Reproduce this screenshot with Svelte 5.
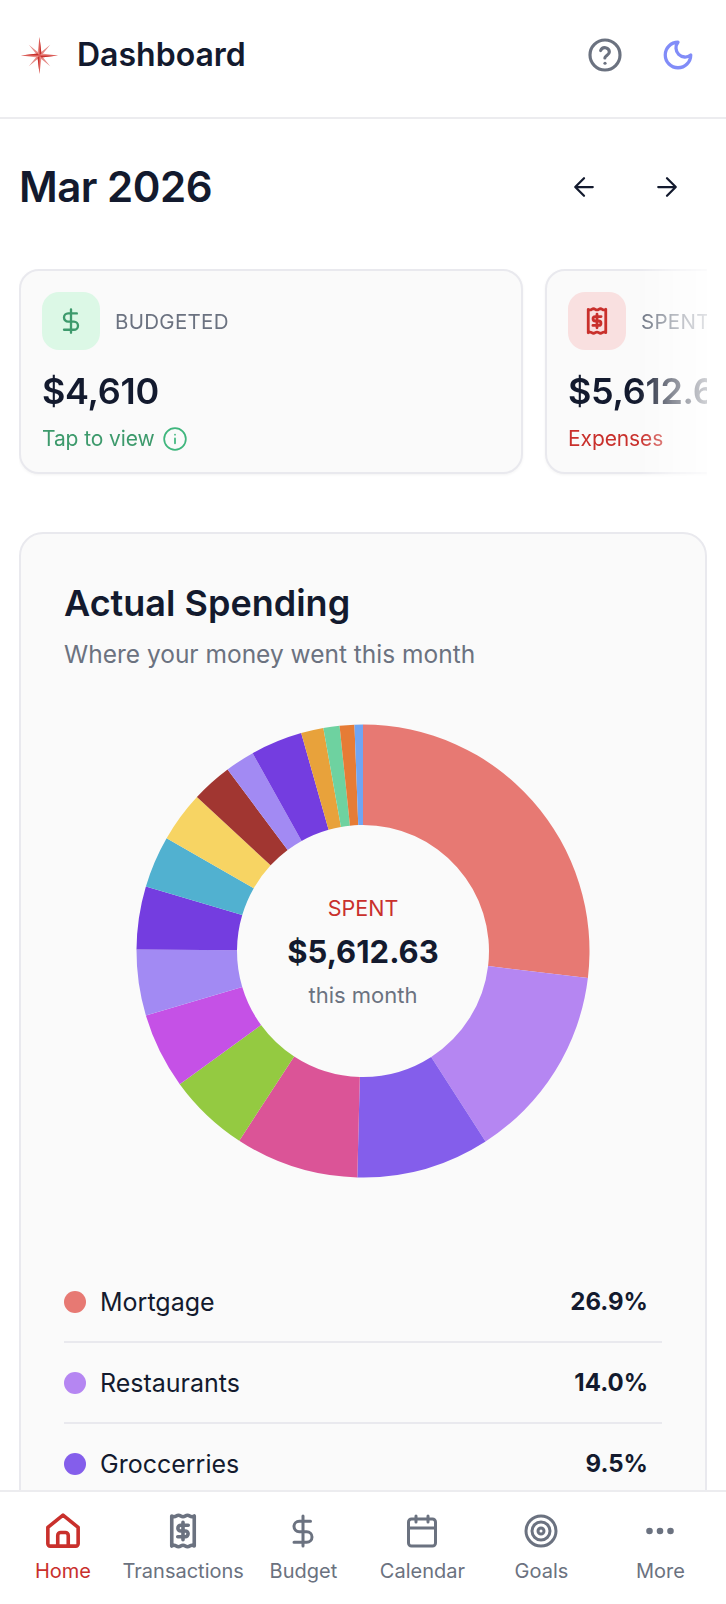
<script>
  const R = 226.5, r = 126, C = 230;
  const raw = [
    [26.9,'#e77973'],[14.0,'#b586f2'],[9.5,'#845eeb'],[8.8,'#db5497'],[5.8,'#94ca41'],
    [5.4,'#c551e6'],[4.7,'#a28af3'],[4.5,'#743de0'],[3.7,'#51b1d0'],[3.6,'#f7d463'],
    [2.9,'#a13631'],[2.1,'#a28af3'],[3.7,'#743de0'],[1.6,'#e8a23b'],[1.15,'#6ed2a0'],
    [1.05,'#e67c36'],[0.6,'#70a5f3']
  ];
  const pt = (rad, p) => {
    const a = p / 100 * 2 * Math.PI;
    return `${(C + rad * Math.sin(a)).toFixed(2)} ${(C - rad * Math.cos(a)).toFixed(2)}`;
  };
  let cum = 0;
  const segs = raw.map(([v, c]) => {
    const s = cum, e = cum + v; cum = e;
    const large = v > 50 ? 1 : 0;
    return { c, d: `M${pt(R, s)}A${R} ${R} 0 ${large} 1 ${pt(R, e)}L${pt(r, e)}A${r} ${r} 0 ${large} 0 ${pt(r, s)}Z` };
  });
  const legend = [
    ['Mortgage','26.9%','#e77973'],['Restaurants','14.0%','#b586f2'],['Groccerries','9.5%','#845eeb']
  ];
  const nav = ['Home','Transactions','Budget','Calendar','Goals','More'];
  const receipt = "M4.500 2q1.500 1 3 0t3 0 3 0 3 0 3 0V22q-1.500-1-3 0t-3 0-3 0-3 0-3 0Z";
  const dollar = "M15.500 8.200h-5a1.900 1.900 0 0 0 0 3.800h3a1.900 1.900 0 0 1 0 3.800h-5M12 6.200v11.600";
</script>

<div class="page">
  <header class="top">
    <div class="brand">
      <svg class="logo" viewBox="0 0 40 40" aria-hidden="true">
        <path d="M9 9 20 18 31 9 22 20 31 31 20 22 9 31 18 20Z" fill="#e58a85"/>
        <path d="M20 1 22 18 39 20 22 22 20 39 18 22 1 20 18 18Z" fill="#ea8a84"/>
        <path d="M20 1 22 18 20 20ZM39 20 22 22 20 20ZM20 39 18 22 20 20ZM1 20 18 18 20 20Z" fill="#c9302c"/>
      </svg>
      <h1>Dashboard</h1>
    </div>
    <div class="top-actions">
      <svg class="i help" viewBox="0 0 24 24"><circle cx="12" cy="12" r="10"/><path d="M9.100 9a3 3 0 0 1 5.800 1c0 2-3 2.600-3 4"/><path d="M12 17.500h.01"/></svg>
      <svg class="i moon" viewBox="0 0 24 24"><path d="M12 3a6.400 6.400 0 0 0 9 9 9 9 0 1 1-9-9Z"/></svg>
    </div>
  </header>

  <section class="month">
    <h2>Mar 2026</h2>
    <div class="arrows">
      <svg class="i arrow" viewBox="0 0 24 24"><path d="M19 12H5M12 19l-7-7 7-7"/></svg>
      <svg class="i arrow" viewBox="0 0 24 24"><path d="M5 12h14M12 5l7 7-7 7"/></svg>
    </div>
  </section>

  <div class="cards">
    <div class="stat first">
      <div class="stat-head">
        <span class="badge green">
          <svg class="i" viewBox="0 0 24 24"><path d="M12 2v20M17 5.500H9.500a3.500 3.500 0 0 0 0 7h5a3.500 3.500 0 0 1 0 7H6"/></svg>
        </span>
        <span class="stat-label">BUDGETED</span>
      </div>
      <div class="stat-value">$4,610</div>
      <div class="stat-note green-text">Tap to view
        <svg class="i info" viewBox="0 0 24 24"><circle cx="12" cy="12" r="10"/><path d="M12 16v-4.500M12 8h.01"/></svg>
      </div>
    </div>
    <div class="stat">
      <div class="stat-head">
        <span class="badge red">
          <svg class="i thick" viewBox="0 0 24 24"><path d={receipt}/><path d={dollar}/></svg>
        </span>
        <span class="stat-label">SPENT</span>
      </div>
      <div class="stat-value">$5,612.63</div>
      <div class="stat-note red-text">Expenses</div>
    </div>
  </div>

  <section class="panel">
    <h3>Actual Spending</h3>
    <p class="sub">Where your money went this month</p>
    <div class="donut">
      <svg viewBox="0 0 460 460" width="460" height="460" aria-hidden="true">
        {#each segs as s}<path d={s.d} fill={s.c}/>{/each}
      </svg>
      <div class="center">
        <div class="c-label">SPENT</div>
        <div class="c-value">$5,612.63</div>
        <div class="c-sub">this month</div>
      </div>
    </div>
    <ul class="legend">
      {#each legend as [n, p, c]}
        <li>
          <span class="dot" style:background={c}></span>
          <span class="name">{n}</span>
          <span class="pct">{p}</span>
        </li>
      {/each}
    </ul>
  </section>

  <nav class="bottom">
    {#each nav as n, i}
      <div class="tab" class:active={i === 0}>
        <svg class="i" class:thick={i < 2} viewBox="0 0 24 24">
          {#if i === 0}
            <path d="M12 1.400 22.100 9.600V20.500a1.600 1.600 0 0 1-1.600 1.600H3.500a1.600 1.600 0 0 1-1.600-1.600V9.600Z"/><path d="M8.500 22v-7a2 2 0 0 1 2-2h3a2 2 0 0 1 2 2v7"/>
          {:else if i === 1}
            <path d={receipt}/><path d={dollar}/>
          {:else if i === 2}
            <path d="M12 2v20M17 5.500H9.500a3.500 3.500 0 0 0 0 7h5a3.500 3.500 0 0 1 0 7H6"/>
          {:else if i === 3}
            <rect x="3" y="4" width="18" height="18" rx="2"/><path d="M8 2v4M16 2v4M3 10h18"/>
          {:else if i === 4}
            <circle cx="12" cy="12" r="10"/><circle cx="12" cy="12" r="6"/><circle cx="12" cy="12" r="2"/>
          {:else}
            <circle cx="5" cy="12" r="1.200" class="fill"/><circle cx="12" cy="12" r="1.200" class="fill"/><circle cx="19" cy="12" r="1.200" class="fill"/>
          {/if}
        </svg>
        <span>{n}</span>
      </div>
    {/each}
  </nav>
</div>

<style>
  :global(body) { margin: 0; background: #fff; }
  .page {
    position: relative;
    width: 726px;
    height: 1604px;
    overflow: hidden;
    background: #fff;
    font-family: Inter, "Liberation Sans", sans-serif;
    color: #131a2e;
  }
  .i { fill: none; stroke: currentColor; stroke-width: 2; stroke-linecap: round; stroke-linejoin: round; display: block; }
  .i.thick { stroke-width: 2.400; }
  .top {
    height: 119px;
    box-sizing: border-box;
    border-bottom: 2px solid #ececef;
    display: flex;
    align-items: center;
    justify-content: space-between;
    padding: 0 31px 7px 20px;
  }
  .brand { display: flex; align-items: center; gap: 18px; }
  .logo { width: 39px; height: 39px; }
  h1 { margin: 0; font-size: 32px; font-weight: 600; line-height: 1; }
  .top-actions { display: flex; gap: 38px; align-items: center; }
  .help { width: 36px; height: 36px; color: #6b7280; stroke-width: 2.100; }
  .moon { width: 34px; height: 34px; color: #818cf8; stroke-width: 2.300; }
  .month {
    display: flex;
    align-items: center;
    justify-content: space-between;
    padding: 43px 44px 0 19px;
    height: 50px;
  }
  h2 { margin: 0; font-size: 42px; font-weight: 600; letter-spacing: -0.5px; line-height: 50px; }
  .arrows { display: flex; gap: 53px; color: #131a2e; }
  .arrow { width: 30px; height: 30px; stroke-width: 1.800; }
  .cards {
    margin-top: 57px;
    margin-left: 19px;
    width: 688px;
    display: flex;
    gap: 22px;
    overflow: hidden;
    padding-bottom: 6px;
    -webkit-mask-image: linear-gradient(to right, #000 90%, rgba(0,0,0,.5) 95%, rgba(0,0,0,.2) 100%);
    mask-image: linear-gradient(to right, #000 90%, rgba(0,0,0,.5) 95%, rgba(0,0,0,.2) 100%);
  }
  .stat {
    flex: 0 0 504px;
    height: 205px;
    box-sizing: border-box;
    background: #fafafa;
    border: 2px solid #e9e9ee;
    border-radius: 20px;
    padding: 21px 21px;
    box-shadow: 0 1px 3px rgba(0,0,0,.05);
  }
  .stat-head { display: flex; align-items: center; gap: 15px; }
  .badge {
    width: 58px; height: 58px; border-radius: 17px;
    display: flex; align-items: center; justify-content: center;
  }
  .badge svg { width: 28px; height: 28px; }
  .badge.green { background: #dcf8e6; color: #3d9a6c; }
  .badge.red { background: #f9e0e0; color: #c9302c; }
  .stat-label { font-size: 20.500px; color: #6b7280; letter-spacing: .3px; }
  .stat-value { margin-top: 18px; font-size: 36px; font-weight: 600; letter-spacing: -0.3px; line-height: 46px; }
  .stat-note { margin-top: 12px; font-size: 21px; letter-spacing: -0.1px; display: flex; align-items: center; gap: 7px; line-height: 26px; }
  .green-text { color: #3d9a6c; }
  .red-text { color: #c9302c; }
  .info { width: 26px; height: 26px; color: #3fb67d; stroke-width: 1.600; }
  .panel {
    position: absolute;
    left: 19px;
    top: 532px;
    width: 688px;
    height: 1100px;
    box-sizing: border-box;
    background: #fafafa;
    border: 2px solid #e9e9ee;
    border-radius: 24px;
    padding: 48px 43px;
  }
  h3 { margin: 0; font-size: 36px; font-weight: 600; line-height: 42px; }
  .sub { margin: 14px 0 0; font-size: 24.500px; color: #6b7280; line-height: 32px; }
  .donut { position: relative; width: 460px; height: 460px; margin: 51px auto 0; }
  .donut svg { display: block; }
  .center {
    position: absolute; inset: 0;
    display: flex; flex-direction: column; align-items: center; justify-content: center;
    text-align: center;
  }
  .c-label { color: #c9302c; font-size: 21.500px; line-height: 26px; }
  .c-value { font-size: 31px; font-weight: 700; margin-top: 11px; line-height: 40px; }
  .c-sub { font-size: 22px; color: #6b7280; margin-top: 10px; line-height: 26px; }
  .legend { list-style: none; margin: 81px 0 0; padding: 0; width: 598px; }
  .legend li {
    display: flex; align-items: center;
    height: 81px;
    box-sizing: border-box;
    border-bottom: 2px solid #e9e9ee;
    padding-right: 14px;
    font-size: 25px;
  }
  .dot { width: 22px; height: 22px; border-radius: 50%; margin-right: 14px; }
  .name { flex: 1; }
  .pct { font-weight: 700; font-size: 24px; }
  .bottom {
    position: absolute;
    left: 0; right: 0; bottom: 0;
    height: 114px;
    box-sizing: border-box;
    background: #fff;
    border-top: 2px solid #ececef;
    display: flex;
    padding: 0 6px 0 3.500px;
  }
  .tab {
    flex: 1 1 0;
    display: flex; flex-direction: column; align-items: center;
    padding-top: 21px;
    color: #6b7280;
    font-size: 20px;
    white-space: nowrap;
  }
  .tab svg { width: 36px; height: 36px; margin-bottom: 10px; }
  .tab.active { color: #c9302c; }
  .fill { fill: currentColor; }
</style>
